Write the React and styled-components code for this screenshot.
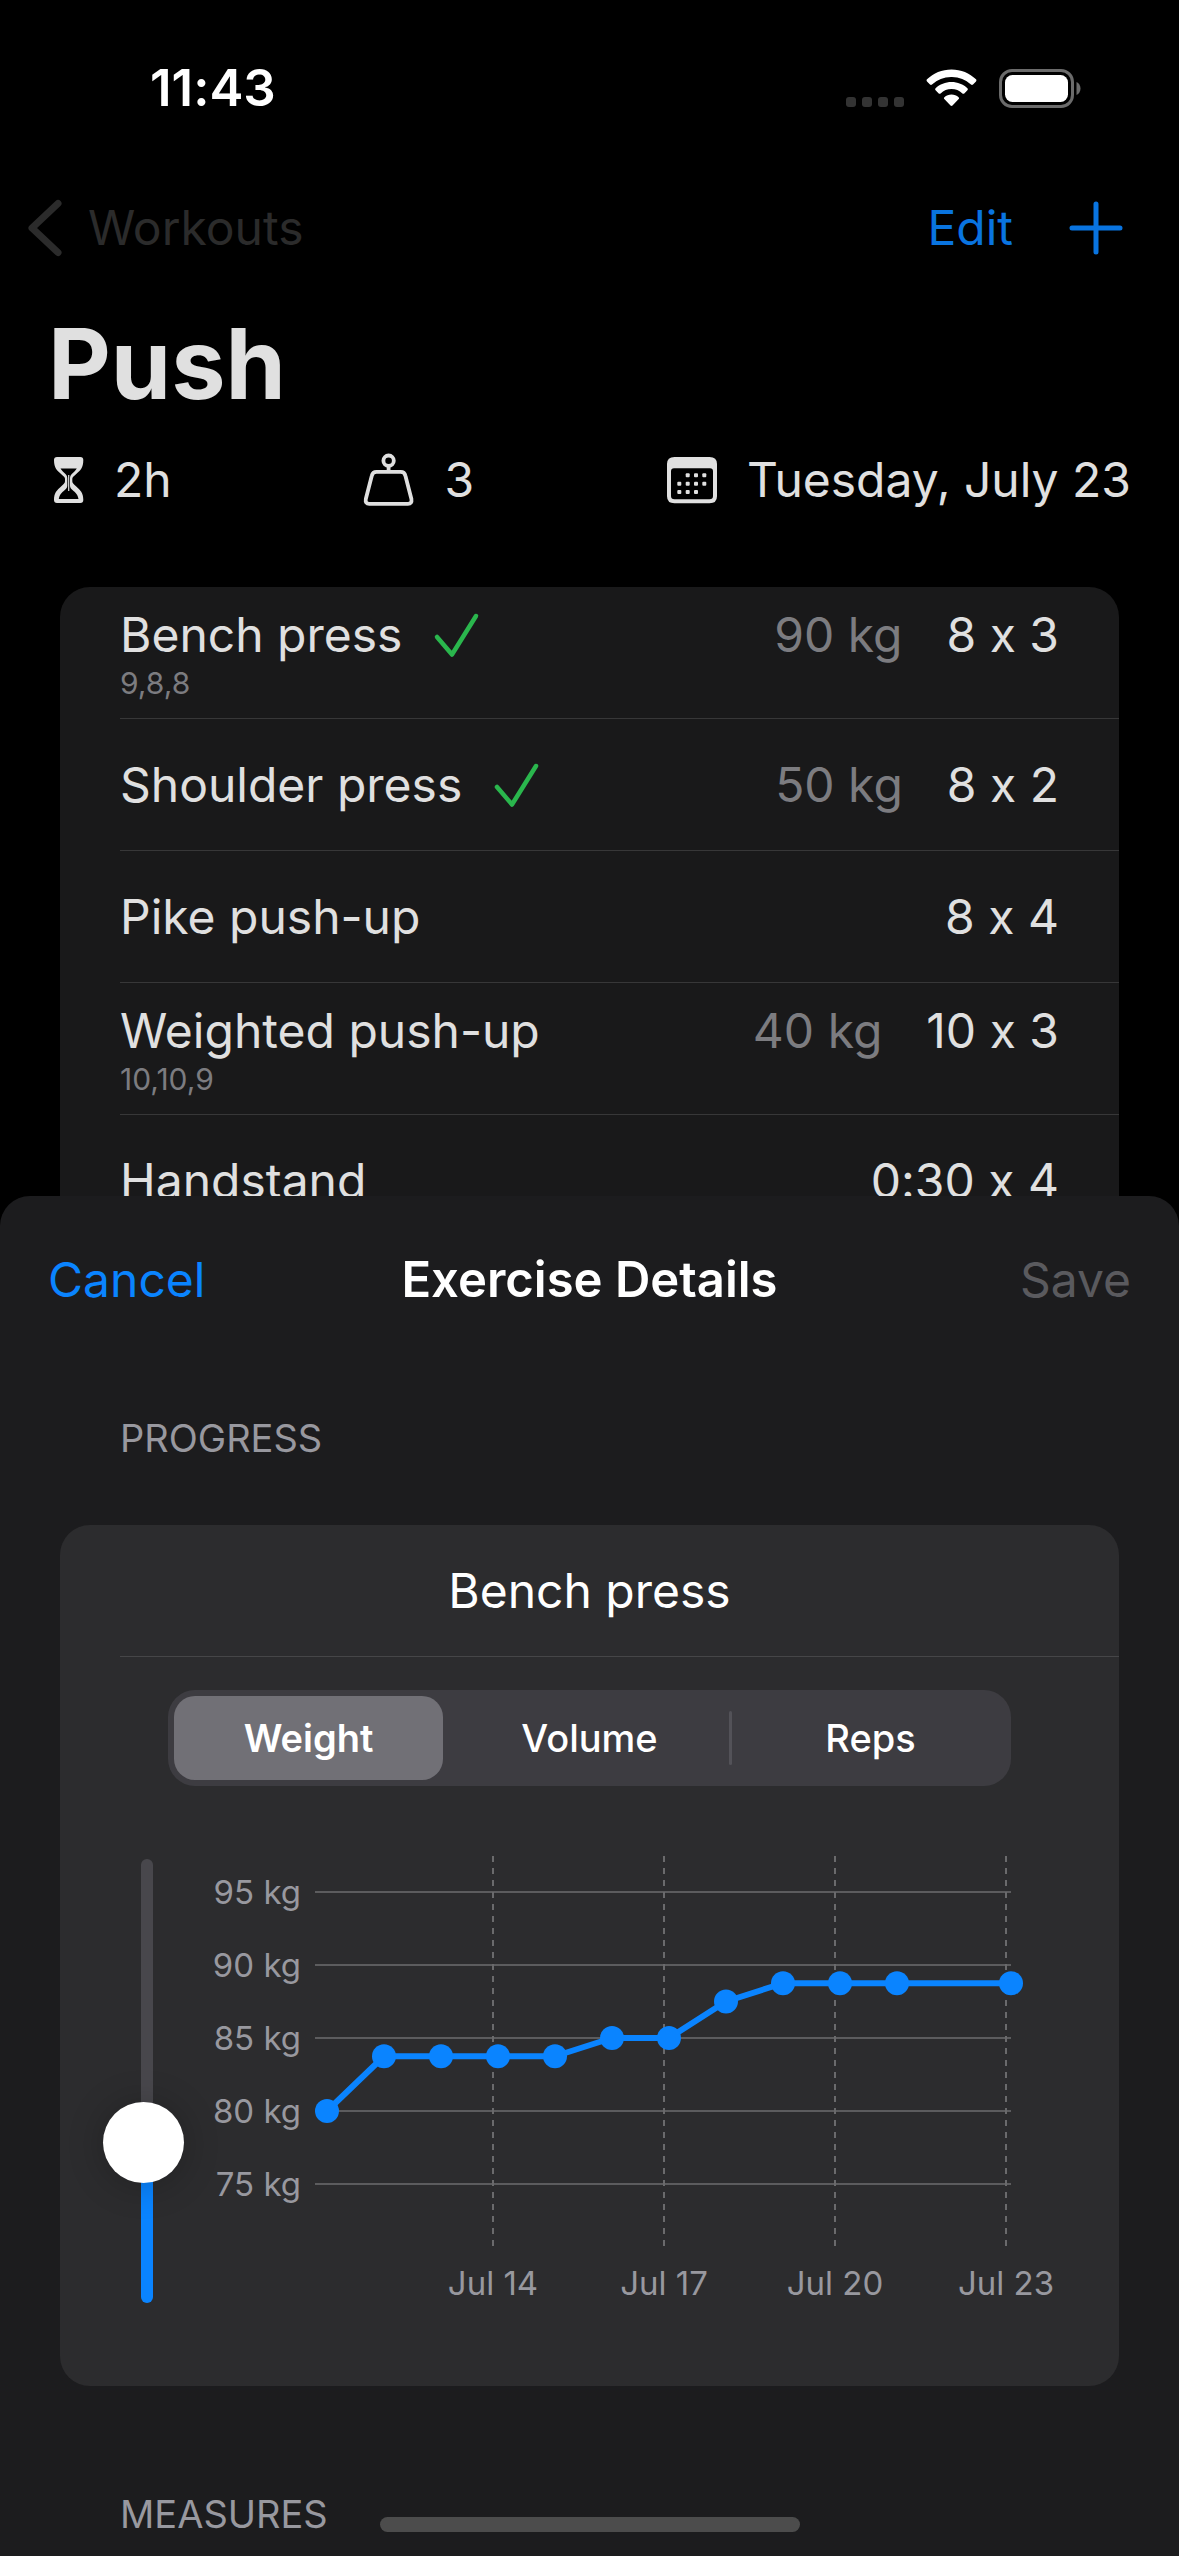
import React, { useId, useState } from "react";
import styled, { createGlobalStyle, css } from "styled-components";

const GlobalStyle = createGlobalStyle`
  *, *::before, *::after { box-sizing: border-box; }
  body { margin: 0; background: #000; }
  h1, h2, h3, p, ul { margin: 0; padding: 0; font-size: inherit; font-weight: inherit; }
  ul { list-style: none; }
  button { border: 0; padding: 0; background: none; font: inherit; color: inherit; cursor: pointer; }
  svg { display: block; flex: none; }
`;

const Page = styled.div`
  display: flex;
  flex-direction: column;
  position: relative;
  height: 100vh;
  overflow: hidden;
  background: #000;
  color: #e0e0e0;
  font-family: Inter, "Liberation Sans", sans-serif;
  font-size: 48px;
  line-height: 60px;
  font-variant-ligatures: no-contextual;

  > * { flex-shrink: 0; }
`;

const StatusBar = styled.div`
  display: flex;
  justify-content: space-between;
  align-items: center;
  height: 176px;
  padding: 0 98px 0 150px;
  color: #fff;
  font-size: 51px;
  font-weight: 600;
`;

const StatusIcons = styled.div`
  display: flex;
  align-items: center;
  gap: 22px;
`;

const NavBar = styled.header`
  display: flex;
  justify-content: space-between;
  align-items: center;
  height: 104px;
  padding: 0 54px 0 26px;
`;

const BackLink = styled.a`
  display: flex;
  align-items: center;
  gap: 24px;
  color: #2b2b2b;
  text-decoration: none;
`;

const NavActions = styled.div`
  display: flex;
  align-items: center;
  gap: 54px;
  color: #0974e0;
`;

const Title = styled.h1`
  padding: 24px 48px 0;
  font-size: 97px;
  line-height: 120px;
  font-weight: 700;
`;

const Facts = styled.ul`
  display: flex;
  justify-content: space-between;
  padding: 26px 48px 0;
`;

const Fact = styled.li`
  display: flex;
  align-items: center;
  gap: 28px;
`;

const Card = styled.section`
  flex: none;
  margin: ${(p) => p.$top}px 60px 0;
  border-radius: 30px;
  background: ${(p) => p.$bg};
`;

const BlankCard = styled(Card)`
  height: 132px;
`;

const ExerciseRow = styled.li`
  margin-left: 60px;
  padding-right: 60px;
  height: 132px;
  display: flex;
  flex-direction: column;
  justify-content: center;
  border-bottom: 1px solid #373738;
`;

const RowLine = styled.div`
  display: flex;
  align-items: center;
`;

const RowName = styled.span`
  margin-right: 30px;
`;

const RowLoad = styled.span`
  margin-left: auto;
  color: #7c7c80;
`;

const RowSets = styled.span`
  margin-left: ${(p) => (p.$alone ? "auto" : "44px")};
`;

const RowNote = styled.p`
  font-size: 30px;
  line-height: 36px;
  color: #7c7c80;
`;

const Sheet = styled.main`
  position: relative;
  flex-grow: 1;
  margin-top: -51px;
  border-radius: 30px 30px 0 0;
  background: #1c1c1e;
  color: #fff;
`;

const SheetBar = styled.header`
  display: grid;
  grid-template-columns: 1fr auto 1fr;
  align-items: center;
  height: 168px;
  padding: 0 48px;
`;

const SheetTitle = styled.h2`
  font-size: 49px;
  font-weight: 600;
`;

const SheetButton = styled.button`
  justify-self: ${(p) => p.$side};
  color: #0a84ff;
  &:disabled { color: #5a5a5e; cursor: default; }
`;

const SectionLabel = styled.h3`
  padding: ${(p) => p.$top}px 120px 0;
  font-size: 38px;
  line-height: 48px;
  color: #98989f;
`;

const CardTitle = styled.h3`
  margin-left: 60px;
  padding-right: 60px;
  height: 132px;
  line-height: 132px;
  border-bottom: 1px solid #464648;
  text-align: center;
`;

const CardBody = styled.div`
  padding: 33px 48px 60px 40px;
`;

const Segments = styled.fieldset`
  display: grid;
  grid-template-columns: repeat(3, 1fr);
  margin: 0 60px 0 68px;
  padding: 0;
  height: 96px;
  border: 0;
  border-radius: 27px;
  background: #3d3c41;
  font-size: 38px;
  line-height: 84px;
`;

const Segment = styled.label`
  position: relative;
  padding: 6px;
  text-align: center;
  font-weight: 500;
  cursor: pointer;
  ${(p) => p.$ruled && css`
    &::before {
      content: "";
      position: absolute;
      left: -1px;
      top: 21px;
      width: 3px;
      height: 54px;
      border-radius: 2px;
      background: #535258;
    }
  `}
`;

const SegmentFace = styled.span`
  display: block;
  border-radius: 21px;
  ${(p) => p.$active && css`background: #717076; font-weight: 600;`}
`;

const HiddenRadio = styled.input`
  position: absolute;
  opacity: 0;
  margin: 0;
`;

const ChartArea = styled.div`
  display: flex;
  margin-top: 60px;
`;

const SliderBox = styled.label`
  display: flex;
  flex: none;
  width: 112px;
  padding: 13px 0 0 41px;
`;

const Slider = styled.input`
  appearance: none;
  writing-mode: vertical-lr;
  direction: rtl;
  width: 12px;
  height: 444px;
  margin: 0;
  border-radius: 6px;
  background: linear-gradient(to top, #0a84ff ${(p) => p.$value}%, #48474c ${(p) => p.$value}%);

  &::-webkit-slider-runnable-track {
    width: 12px;
    height: 444px;
  }
  &::-webkit-slider-thumb {
    appearance: none;
    width: 81px;
    height: 81px;
    margin-left: -38px;
    border-radius: 50%;
    background: #fff;
    box-shadow: 0 2px 36px rgba(0, 0, 0, 0.24);
  }
`;

const ChartSvg = styled.svg`
  flex: 1 1 0;
  min-width: 0;
  height: auto;
  font-size: 33px;
  fill: #98989f;
`;

const HomeIndicator = styled.div`
  position: absolute;
  left: 50%;
  bottom: 24px;
  width: 420px;
  height: 15px;
  margin-left: -210px;
  border-radius: 8px;
  background: #4c4c4c;
`;

const SignalDots = () => (
  <svg width="58" height="38" viewBox="0 0 58 38" fill="#333">
    {[0, 16, 32, 48].map((x) => (
      <rect key={x} x={x} y="28" width="10" height="10" rx="3" />
    ))}
  </svg>
);

const WifiIcon = () => (
  <svg width="51" height="38" viewBox="0 0 51 38" fill="#fff">
    <path d="M25.500 0.500C35 0.500 43.600 4.200 50 10.300c.6.600.6 1.500 0 2.100l-3 3.100c-.6.600-1.400.6-2 0A28 28 0 0 0 25.500 8 28 28 0 0 0 6 15.500c-.6.600-1.400.6-2 0l-3-3.100c-.6-.6-.6-1.500 0-2.100C7.400 4.200 16 .5 25.500.5z" />
    <path d="M25.500 13c6.100 0 11.700 2.300 15.900 6.200.6.600.6 1.400 0 2l-3.100 3.200c-.6.500-1.300.5-1.900 0a16 16 0 0 0-21.800 0c-.6.500-1.300.5-1.900 0l-3.100-3.200c-.6-.6-.6-1.400 0-2C13.800 15.300 19.400 13 25.500 13z" />
    <path d="M25.500 25.500c2.700 0 5.200 1 7.100 2.700.6.500.6 1.300.1 1.900l-6.200 6.500c-.6.600-1.400.6-2 0l-6.200-6.500c-.5-.6-.5-1.400.1-1.900 1.900-1.700 4.400-2.700 7.100-2.700z" />
  </svg>
);

const BatteryIcon = () => (
  <svg width="82" height="39" viewBox="0 0 82 39">
    <rect x="1.500" y="1.500" width="72" height="36" rx="11.500" fill="none" stroke="#6b6b6b" strokeWidth="3" />
    <rect x="6" y="6" width="63" height="27" rx="7.500" fill="#fff" />
    <path d="M77.500 13c2.500 1 4 3.600 4 6.500s-1.500 5.500-4 6.500z" fill="#6b6b6b" />
  </svg>
);

const ChevronIcon = () => (
  <svg width="38" height="60" viewBox="0 0 38 60" fill="none" stroke="currentColor" strokeWidth="7" strokeLinecap="round" strokeLinejoin="round">
    <path d="M32 5.500L6 30l26 24.500" />
  </svg>
);

const PlusIcon = () => (
  <svg width="58" height="58" viewBox="0 0 58 58" stroke="currentColor" strokeWidth="5" strokeLinecap="round">
    <path d="M29 5v48M5 29h48" />
  </svg>
);

const HourglassIcon = () => (
  <svg width="38" height="54" viewBox="0 0 38 54">
    <path d="M9 4h23.300q3 0 3 3c0 8-3 10.500-7.300 14.200-2.500 2.200-3.700 2.800-3.700 4.600v2.400c0 1.800 1.200 2.600 3.700 5 4.300 4 7.300 6.300 7.300 13.800q0 3-3 3H9q-3 0-3-3c0-7.500 3-9.800 7.300-13.800 2.500-2.400 3.700-3.200 3.700-5v-2.400c0-1.800-1.200-2.400-3.700-4.600C9 17.500 6 15 6 7q0-3 3-3z" fill="#e0e0e0" />
    <path d="M12.500 15.500h16.300c-1.300 2.300-3.300 3.800-5 5.500-1.300 1.300-1.800 2.500-1.800 4.500v7c0 2 .8 3 2.500 4.500 2.800 2.600 5.300 4.500 6 9H10.800c.7-4.500 3.200-6.400 6-9 1.700-1.500 2.500-2.500 2.500-4.500v-7c0-2-.5-3.200-1.800-4.500-1.700-1.700-3.700-3.200-5-5.500z" fill="#000" />
    <path d="M20.700 22v16" stroke="#e0e0e0" strokeWidth="1.200" />
  </svg>
);

const WeightIcon = () => (
  <svg width="54" height="58" viewBox="0 0 54 58" fill="none" stroke="#e0e0e0" strokeWidth="3.800">
    <circle cx="26.600" cy="9.700" r="5.200" />
    <path d="M26.600 15V20" />
    <path d="M14.500 20.900h24.200q3.800 0 4.700 3.900l6 23.200q.8 4.800-3.500 4.800H7.300q-4.300 0-3.500-4.800l6-23.200q.9-3.900 4.700-3.900z" strokeLinejoin="round" />
  </svg>
);

const CalendarIcon = () => (
  <svg width="54" height="54" viewBox="0 0 54 54" fill="#e0e0e0">
    <path fillRule="evenodd" d="M9.500 4h35q7.500 0 7.500 7v32.300q0 7-7.500 7h-35q-7.500 0-7.500-7V11q0-7 7.500-7zM9 15.300q-3 0-3 3V43q0 3.300 3.500 3.300h35q3.500 0 3.500-3.300V18.300q0-3-3-3z" />
    {[[22.7, 22.3], [31, 22.3], [39.3, 22.3], [14.3, 30.7], [22.7, 30.7], [31, 30.7], [39.3, 30.7], [14.3, 39], [22.7, 39], [31, 39]].map(([x, y]) => (
      <rect key={`${x}-${y}`} x={x - 2} y={y - 2} width="4" height="4" rx="1" />
    ))}
  </svg>
);

const CheckIcon = () => (
  <svg width="48" height="48" viewBox="0 0 48 48" fill="none" stroke="#2ab64d" strokeWidth="4.500" strokeLinecap="round" strokeLinejoin="round">
    <path d="M5 26L20 43.500 44 5" />
  </svg>
);

const exercises = [
  { name: "Bench press", done: true, load: "90 kg", sets: "8 x 3", note: "9,8,8" },
  { name: "Shoulder press", done: true, load: "50 kg", sets: "8 x 2" },
  { name: "Pike push-up", sets: "8 x 4" },
  { name: "Weighted push-up", load: "40 kg", sets: "10 x 3", note: "10,10,9" },
  { name: "Handstand", sets: "0:30 x 4" },
];

const weights = [
  [11, 80], [12, 83.75], [13, 83.75], [14, 83.75], [15, 83.75], [16, 85],
  [17, 85], [18, 87.5], [19, 88.75], [20, 88.75], [21, 88.75], [23, 88.75],
];

const dayX = (day) => 115 + (day - 11) * 57;
const kgY = (kg) => 46 + ((95 - kg) * 73) / 5;

const ProgressChart = () => (
  <ChartSvg viewBox="0 0 859 480" role="img" aria-label="Weight progress">
    {[95, 90, 85, 80, 75].map((kg) => (
      <g key={kg}>
        <text x="89" y={kgY(kg) + 12} textAnchor="end">{kg} kg</text>
        <path d={`M103 ${kgY(kg)}H799`} stroke="#5c5c5e" strokeWidth="2" />
      </g>
    ))}
    {[14, 17, 20, 23].map((day) => (
      <g key={day}>
        <text x={dayX(day) - 5} y="449" textAnchor="middle">Jul {day}</text>
        <path d={`M${dayX(day) - 5} 10V400`} stroke="#6a6a6c" strokeWidth="2" strokeDasharray="6 6" />
      </g>
    ))}
    <polyline points={weights.map(([d, kg]) => `${dayX(d)},${kgY(kg)}`).join(" ")} fill="none" stroke="#0a84ff" strokeWidth="6" strokeLinejoin="round" />
    {weights.map(([d, kg]) => (
      <circle key={d} cx={dayX(d)} cy={kgY(kg)} r="12" fill="#0a84ff" />
    ))}
  </ChartSvg>
);

export default function App() {
  const [metric, setMetric] = useState("Weight");
  const [zoom, setZoom] = useState(33);
  const group = useId();
  const metrics = ["Weight", "Volume", "Reps"];
  const active = metrics.indexOf(metric);

  return (
    <Page>
      <GlobalStyle />
      <StatusBar>
        <span>11:43</span>
        <StatusIcons>
          <SignalDots />
          <WifiIcon />
          <BatteryIcon />
        </StatusIcons>
      </StatusBar>
      <NavBar>
        <BackLink href="#workouts">
          <ChevronIcon />
          Workouts
        </BackLink>
        <NavActions>
          <button type="button">Edit</button>
          <button type="button" aria-label="Add exercise"><PlusIcon /></button>
        </NavActions>
      </NavBar>
      <Title>Push</Title>
      <Facts>
        <Fact><HourglassIcon />2h</Fact>
        <Fact><WeightIcon />3</Fact>
        <Fact><CalendarIcon />Tuesday, July 23</Fact>
      </Facts>
      <Card $top={77} $bg="#19191a">
        <ul>
          {exercises.map((e) => (
            <ExerciseRow key={e.name}>
              <RowLine>
                <RowName>{e.name}</RowName>
                {e.done && <CheckIcon />}
                {e.load && <RowLoad>{e.load}</RowLoad>}
                <RowSets $alone={!e.load}>{e.sets}</RowSets>
              </RowLine>
              {e.note && <RowNote>{e.note}</RowNote>}
            </ExerciseRow>
          ))}
        </ul>
      </Card>
      <Sheet>
        <SheetBar>
          <SheetButton type="button" $side="start">Cancel</SheetButton>
          <SheetTitle>Exercise Details</SheetTitle>
          <SheetButton type="button" $side="end" disabled>Save</SheetButton>
        </SheetBar>
        <SectionLabel $top={50}>PROGRESS</SectionLabel>
        <Card $top={63} $bg="#2c2c2e">
          <CardTitle>Bench press</CardTitle>
          <CardBody>
            <Segments>
              {metrics.map((m, i) => (
                <Segment key={m} $ruled={i > 0 && i !== active && i - 1 !== active}>
                  <HiddenRadio type="radio" name={group} checked={m === metric} onChange={() => setMetric(m)} />
                  <SegmentFace $active={m === metric}>{m}</SegmentFace>
                </Segment>
              ))}
            </Segments>
            <ChartArea>
              <SliderBox>
                <Slider
                  type="range"
                  aria-label="Chart scale"
                  min="0"
                  max="100"
                  value={zoom}
                  $value={zoom}
                  onChange={(e) => setZoom(Number(e.target.value))}
                />
              </SliderBox>
              <ProgressChart />
            </ChartArea>
          </CardBody>
        </Card>
        <SectionLabel $top={104}>MEASURES</SectionLabel>
        <BlankCard $top={18} $bg="#2c2c2e" />
      </Sheet>
      <HomeIndicator />
    </Page>
  );
}
